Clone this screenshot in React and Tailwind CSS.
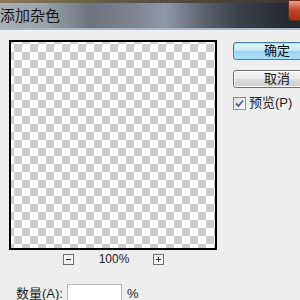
import React from "react";

const font = { fontFamily: '"Liberation Sans", "Noto Sans CJK SC", sans-serif' };

export default function App() {
  return (
    <div
      className="w-[300px] h-[300px] overflow-hidden flex flex-col bg-[#eeeeee] text-[#1e1e1e]"
      style={font}
    >
      {/* Title bar */}
      <div className="relative h-[30px] shrink-0 bg-[linear-gradient(90deg,#aab0b6_0%,#9aa1a8_15%,#6c747e_30%,#7c8591_45%,#8f98a6_55%,#5a626d_68%,#3a4049_80%,#262b33_95%)]">
        <div className="h-[3px] bg-[linear-gradient(90deg,#8a7a5a,#5a5040_50%,#3a3530)]" />
        <div className="pl-[0px] pt-[4px] text-[15px] leading-[18px] text-[#151515] whitespace-nowrap">
          添加杂色
        </div>
        <div className="absolute right-[-8px] top-0 w-[20px] h-[21px] rounded-bl-[4px] border border-[#6b2a1e] bg-[linear-gradient(180deg,#e9a48f,#c8492c_45%,#a5301a)]" />
        <div className="absolute left-0 right-0 bottom-0 h-[2px] bg-[#a9b7c6]" />
      </div>

      {/* Body */}
      <div className="flex flex-1">
        {/* Left column */}
        <div className="w-[233px] shrink-0 flex flex-col">
          <div className="ml-[9px] mt-[10px] w-[208px] h-[210px] border-2 border-black bg-white bg-[conic-gradient(#cccccc_25%,#ffffff_0_50%,#cccccc_0_75%,#ffffff_0)] bg-[length:16px_16px] bg-[position:3px_-6px]" />

          <div className="flex items-center mt-[4px] h-[11px]">
            <div className="ml-[63px] w-[11px] h-[11px] border border-[#707070] bg-[#f4f4f4] flex items-center justify-center">
              <div className="w-[5px] h-[1px] bg-[#333]" />
            </div>
            <div className="ml-[24px] w-[32px] text-center text-[12px] leading-[11px] text-[#222]">
              100%
            </div>
            <div className="ml-[23px] relative w-[11px] h-[11px] border border-[#707070] bg-[#f4f4f4] flex items-center justify-center">
              <div className="w-[5px] h-[1px] bg-[#333]" />
              <div className="absolute w-[1px] h-[5px] bg-[#333]" />
            </div>
          </div>

          <div className="flex items-start mt-[19px]">
            <div className="ml-[16px] w-[51px] pt-[2px] text-[13px] leading-[16px] whitespace-nowrap">
              数量(A):
            </div>
            <div className="w-[55px] h-[20px] bg-white border border-[#b8b8b8]" />
            <div className="ml-[5px] pt-[2px] text-[13px] leading-[16px]">%</div>
          </div>
        </div>

        {/* Right column */}
        <div className="flex flex-col pt-[12px]">
          <button className="w-[88px] h-[18px] rounded-[3px] border border-[#3c7fb1] bg-[linear-gradient(180deg,#e8f6fd_0%,#c4e5f6_50%,#98d1ef_51%,#b6e0f4_100%)] text-[13px] leading-[14px] text-[#111] shadow-[inset_0_0_0_1px_#9ee2fb]">
            确定
          </button>
          <button className="mt-[10px] w-[88px] h-[18px] rounded-[3px] border border-[#707070] bg-[linear-gradient(180deg,#f2f2f2_0%,#ebebeb_50%,#dddddd_51%,#cfcfcf_100%)] text-[13px] leading-[14px] text-[#111] shadow-[inset_0_0_0_1px_#fcfcfc]">
            取消
          </button>
          <div className="mt-[7px] flex items-center">
            <div className="w-[13px] h-[13px] border border-[#8e8f8f] bg-[linear-gradient(135deg,#dcdcdc,#ffffff)] flex items-center justify-center">
              <svg width="9" height="9" viewBox="0 0 9 9">
                <path d="M1 4.5 L3.5 7 L8 1.5" fill="none" stroke="#4a5f97" strokeWidth="1.8" />
              </svg>
            </div>
            <span className="ml-[3px] text-[13px] leading-[16px] whitespace-nowrap">预览(P)</span>
          </div>
        </div>
      </div>
    </div>
  );
}
